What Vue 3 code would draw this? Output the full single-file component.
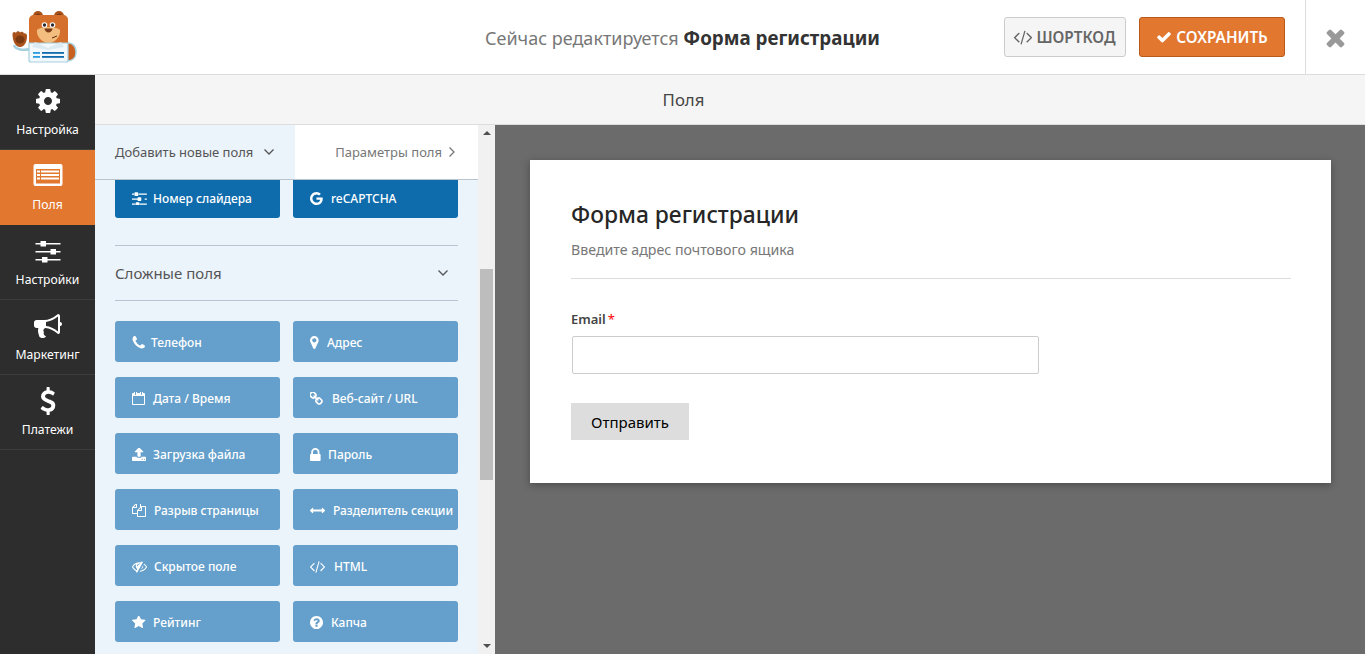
<script setup>
import { ref } from 'vue';

const icons = {
  cog: 'M1152 896q0-106-75-181t-181-75-181 75-75 181 75 181 181 75 181-75 75-181zm512-109v222q0 12-8 23t-20 13l-185 28q-19 54-39 91 35 50 107 138 10 12 10 25t-9 23q-27 37-99 108t-94 71q-12 0-26-9l-138-108q-44 23-91 38-16 136-29 186-7 28-36 28h-222q-14 0-24.500-8.500t-11.500-21.500l-28-184q-49-16-90-37l-141 107q-10 9-25 9-14 0-25-11-126-114-165-168-7-10-7-23 0-12 8-23 15-21 51-66.500t54-70.500q-27-50-41-99l-183-27q-13-2-21-12.500t-8-23.500v-222q0-12 8-23t19-13l186-28q14-46 39-92-40-57-107-138-10-12-10-24 0-10 9-23 26-36 98.500-107.500t94.500-71.500q13 0 26 10l138 107q44-23 91-38 16-136 29-186 7-28 36-28h222q14 0 24.500 8.500t11.500 21.500l28 184q49 16 90 37l142-107q9-9 24-9 13 0 25 10 129 119 165 170 7 8 7 22 0 12-8 23-15 21-51 66.500t-54 70.500q26 50 41 98l183 28q13 2 21 12.500t8 23.500z',
  sliders: 'M480 1408v128h-352v-128h352zm352-128q26 0 45 19t19 45v256q0 26-19 45t-45 19h-256q-26 0-45-19t-19-45v-256q0-26 19-45t45-19h256zm160-384v128h-864v-128h864zm-640-512v128h-224v-128h224zm1312 1024v128h-736v-128h736zm-960-1152q26 0 45 19t19 45v256q0 26-19 45t-45 19h-256q-26 0-45-19t-19-45v-256q0-26 19-45t45-19h256zm320 512q26 0 45 19t19 45v256q0 26-19 45t-45 19h-256q-26 0-45-19t-19-45v-256q0-26 19-45t45-19h256zm640 128v128h-224v-128h224zm0-512v128h-864v-128h864z',
  bullhorn: 'M1664 640q53 0 90.500 37.500t37.500 90.500-37.500 90.500-90.500 37.500v384q0 52-38 90t-90 38q-417-347-812-380-58 19-91 66t-31 100.500 40 92.500q-20 33-23 65.500t6 58 33.500 55 48 50 61.500 50.500q-29 58-111.500 83t-168.500 11.500-132-55.500q-7-23-29.500-87.500t-32-94.500-23-89-15-101 3.500-98.500 22-110.500h-122q-66 0-113-47t-47-113v-192q0-66 47-113t113-47h480q435 0 896-384 52 0 90 38t38 90v384zm-128 604v-954q-394 302-768 343v270q377 42 768 341z',
  usd: 'M1362 1185q0 153-99.500 263.500t-258.500 136.500v175q0 14-9 23t-23 9h-135q-13 0-22.500-9.500t-9.500-22.500v-175q-66-9-127.500-31t-101.500-44.500-74-48-46.500-37.500-17.500-18q-17-21-2-41l103-135q7-10 23-12 15-2 24 9l2 2q113 99 243 125 37 8 74 8 81 0 142.500-43t61.500-122q0-28-15-53t-33.500-42-58.500-37.500-66-32-80-32.500q-39-16-61.500-25t-61.500-26.500-62.500-31-56.500-35.500-53.500-42.500-43.500-49-35.500-58-21-66.500-8.500-78q0-138 98-242t255-134v-180q0-13 9.500-22.500t22.500-9.500h135q14 0 23 9t9 23v176q57 6 110.500 23t87 33.500 63.500 37.500 39 29 15 14q17 18 5 38l-81 146q-8 15-23 16-14 3-27-7-3-3-14.500-12t-39-26.500-58.500-32-74.500-26-85.500-11.500q-95 0-155 43t-60 111q0 26 8.500 48t29.500 41.500 39.500 33 56 31 60.500 27 70 27.500q53 20 81 31.500t76 35 75.500 42.500 62 50 53 63.500 31.500 76.500 13 94z',
  check: 'M1671 566q0 40-28 68l-724 724-136 136q-28 28-68 28t-68-28l-136-136-362-362q-28-28-28-68t28-68l136-136q28-28 68-28t68 28l294 295 656-657q28-28 68-28t68 28l136 136q28 28 28 68z',
  times: 'M1490 1322q0 40-28 68l-136 136q-28 28-68 28t-68-28l-294-294-294 294q-28 28-68 28t-68-28l-136-136q-28-28-28-68t28-68l294-294-294-294q-28-28-28-68t28-68l136-136q28-28 68-28t68 28l294 294 294-294q28-28 68-28t68 28l136 136q28 28 28 68t-28 68l-294 294 294 294q28 28 28 68z',
  code: 'M553 1399l-50 50q-10 10-23 10t-23-10l-466-466q-10-10-10-23t10-23l466-466q10-10 23-10t23 10l50 50q10 10 10 23t-10 23l-393 393 393 393q10 10 10 23t-10 23zm591-1067l-373 1291q-4 13-15.500 19.500t-23.500 2.500l-62-17q-13-4-19.500-15.500t-2.500-24.500l373-1291q4-13 15.500-19.500t23.500-2.500l62 17q13 4 19.500 15.500t2.500 24.500zm657 651l-466 466q-10 10-23 10t-23-10l-50-50q-10-10-10-23t10-23l393-393-393-393q-10-10-10-23t10-23l50-50q10-10 23-10t23 10l466 466q10 10 10 23t-10 23z',
  phone: 'M1600 1240q0 27-10 70.500t-21 68.500q-21 50-122 106-94 51-186 51-27 0-53-3.500t-57.500-12.500-47-14.500-55.500-20.500-49-18q-98-35-175-83-127-79-264-216t-216-264q-48-77-83-175-3-9-18-49t-20.500-55.500-14.500-47-12.500-57.500-3.500-53q0-92 51-186 56-101 106-122 25-11 68.500-21t70.500-10q14 0 21 3 18 6 53 76 11 19 30 54t35 63.500 31 53.500q3 4 17.500 25t21.500 35.500 7 28.500q0 20-28.500 50t-62 55-62 53-28.500 46q0 9 5 22.500t8.500 20.500 14 24 11.500 19q76 137 174 235t235 174q2 1 19 11.500t24 14 20.500 8.500 22.500 5q18 0 46-28.500t53-62 55-62 50-28.500q14 0 28.500 7t35.500 21.500 25 17.500q25 15 53.500 31t63.500 35 54 30q70 35 76 53 3 7 3 21z',
  marker: 'M1152 640q0-106-75-181t-181-75-181 75-75 181 75 181 181 75 181-75 75-181zm256 0q0 109-33 179l-364 774q-16 33-47.500 52t-67.500 19-67.500-19-46.500-52l-365-774q-33-70-33-179 0-212 150-362t362-150 362 150 150 362z',
  calendar: 'M192 1664h1408v-1024h-1408v1024zm384-1216v-288q0-14-9-23t-23-9h-64q-14 0-23 9t-9 23v288q0 14 9 23t23 9h64q14 0 23-9t9-23zm768 0v-288q0-14-9-23t-23-9h-64q-14 0-23 9t-9 23v288q0 14 9 23t23 9h64q14 0 23-9t9-23zm384-64v1280q0 52-38 90t-90 38h-1408q-52 0-90-38t-38-90v-1280q0-52 38-90t90-38h128v-96q0-66 47-113t113-47h64q66 0 113 47t47 113v96h384v-96q0-66 47-113t113-47h64q66 0 113 47t47 113v96h128q52 0 90 38t38 90z',
  link: 'M1456 1216q0-40-28-68l-208-208q-28-28-68-28-42 0-72 32 3 3 19 18.500t21.500 21.500 15 19 13 25.500 3.500 27.500q0 40-28 68t-68 28q-15 0-27.500-3.500t-25.500-13-19-15-21.500-21.500-18.500-19q-33 31-33 73 0 40 28 68l206 207q27 27 68 27 40 0 68-26l147-146q28-28 28-67zm-703-705q0-40-28-68l-206-207q-28-28-68-28-39 0-68 27l-147 146q-28 28-28 67 0 40 28 68l208 208q27 27 68 27 42 0 72-31-3-3-19-18.500t-21.500-21.500-15-19-13-25.500-3.500-27.500q0-40 28-68t68-28q15 0 27.500 3.500t25.500 13 19 15 21.500 21.500 18.500 19q33-31 33-73zm895 705q0 120-85 203l-147 146q-83 83-203 83-121 0-204-85l-206-207q-83-83-83-203 0-123 88-209l-88-88q-86 88-208 88-120 0-204-84l-208-208q-84-84-84-204t85-203l147-146q83-83 203-83 121 0 204 85l206 207q83 83 83 203 0 123-88 209l88 88q86-88 208-88 120 0 204 84l208 208q84 84 84 204z',
  upload: 'M1344 1472q0-26-19-45t-45-19-45 19-19 45 19 45 45 19 45-19 19-45zm256 0q0-26-19-45t-45-19-45 19-19 45 19 45 45 19 45-19 19-45zm128-224v320q0 40-28 68t-68 28h-1472q-40 0-68-28t-28-68v-320q0-40 28-68t68-28h427q21 56 70.500 92t110.500 36h256q61 0 110.500-36t70.500-92h427q40 0 68 28t28 68zm-325-648q-17 40-59 40h-256v448q0 26-19 45t-45 19h-256q-26 0-45-19t-19-45v-448h-256q-42 0-59-40-17-39 14-69l448-448q18-19 45-19t45 19l448 448q31 30 14 69z',
  lock: 'M640 768h512v-192q0-106-75-181t-181-75-181 75-75 181v192zm832 96v576q0 40-28 68t-68 28h-960q-40 0-68-28t-28-68v-576q0-40 28-68t68-28h32v-192q0-184 132-316t316-132 316 132 132 316v192h32q40 0 68 28t28 68z',
  files: 'M1696 384q40 0 68 28t28 68v1216q0 40-28 68t-68 28h-960q-40 0-68-28t-28-68v-288h-544q-40 0-68-28t-28-68v-672q0-40 20-88t48-76l408-408q28-28 76-48t88-20h416q40 0 68 28t28 68v328q68-40 128-40h416zm-544 213l-299 299h299v-299zm-640-384l-299 299h299v-299zm196 647l316-316v-416h-384v416q0 40-28 68t-68 28h-416v640h512v-256q0-40 20-88t48-76zm956 804v-1152h-384v416q0 40-28 68t-68 28h-416v640h896z',
  arrows: 'M1792 896q0 26-19 45l-256 256q-19 19-45 19t-45-19-19-45v-128h-1024v128q0 26-19 45t-45 19-45-19l-256-256q-19-19-19-45t19-45l256-256q19-19 45-19t45 19 19 45v128h1024v-128q0-26 19-45t45-19 45 19l256 256q19 19 19 45z',
  eyeSlash: 'M555 1335l78-141q-87-63-136-159t-49-203q0-121 61-225-229 117-381 353 167 258 427 375zm389-759q0-20-14-34t-34-14q-125 0-214.500 89.500t-89.500 214.500q0 20 14 34t34 14 34-14 14-34q0-86 61-147t147-61q20 0 34-14t14-34zm363-191q0 7-1 9-106 189-316 567t-315 566l-49 89q-10 16-28 16-12 0-134-70-16-10-16-28 0-12 44-87-143-65-263.500-173t-208.500-245q-20-31-20-69t20-69q153-235 380-371t496-136q89 0 180 17l54-97q10-16 28-16 5 0 18 6t31 15.500 33 18.500 31.500 18.500 19.500 11.500q16 10 16 27zm37 447q0 139-79 253.500t-209 164.500l280-502q8 45 8 84zm448 128q0 35-20 69-39 64-109 145-150 172-347.500 267t-419.500 95l74-132q212-18 392.500-137t301.500-307q-115-179-282-294l63-112q95 64 182.500 153t144.500 184q20 34 20 69z',
  star: 'M1728 647q0 22-26 48l-363 354 86 500q1 7 1 20 0 21-10.500 35.500t-30.500 14.500q-19 0-40-12l-449-236-449 236q-22 12-40 12-21 0-31.500-14.500t-10.500-35.500q0-6 2-20l86-500-364-354q-25-27-25-48 0-37 56-46l502-73 225-455q19-41 49-41t49 41l225 455 502 73q56 9 56 46z',
  question: 'M1024 1376v-192q0-14-9-23t-23-9h-192q-14 0-23 9t-9 23v192q0 14 9 23t23 9h192q14 0 23-9t9-23zm256-672q0-88-55.500-163t-138.500-116-170-41q-243 0-371 213-15 24 8 42l132 100q7 6 19 6 16 0 25-12 53-68 86-92 34-24 86-24 48 0 85.500 26t37.500 59q0 38-20 61t-68 45q-63 28-115.500 86.500t-52.500 125.500v36q0 14 9 23t23 9h192q14 0 23-9t9-23q0-19 21.500-49.500t54.500-49.500q32-18 49-28.500t46-35 44.500-48 28-60.500 12.500-81zm384 192q0 209-103 385.500t-279.500 279.500-385.500 103-385.500-103-279.500-279.500-103-385.500 103-385.500 279.500-279.500 385.500-103 385.500 103 279.500 279.500 103 385.500z',
  google: 'M896 786h725q12 67 12 128 0 217-91 387.500t-259.500 266.500-386.500 96q-157 0-299-60.500t-245-163.500-163.500-245-60.500-299 60.500-299 163.500-245 245-163.500 299-60.500q300 0 515 201l-209 201q-123-119-306-119-129 0-238.500 65t-173.500 176.500-64 243.500 64 243.500 173.500 176.500 238.500 65q87 0 160-24t120-60 82-82 51.500-87 22.500-78h-436v-264z'
};

const menu = ref([
  { label: 'Настройка', icon: 'cog' },
  { label: 'Поля', icon: 'list', active: true },
  { label: 'Настройки', icon: 'lines' },
  { label: 'Маркетинг', icon: 'bullhorn' },
  { label: 'Платежи', icon: 'usd' }
]);

// slot: ширина от начала иконки до начала текста
const topFields = ref([
  { label: 'Номер слайдера', icon: 'sliders', slot: 21, box: '128 224 1536 1344' },
  { label: 'reCAPTCHA', icon: 'google', slot: 21, box: '128 128 1536 1536' }
]);

const fancyFields = ref([
  { label: 'Телефон', icon: 'phone', slot: 19, box: '128 128 1472 1472' },
  { label: 'Адрес', icon: 'marker', slot: 17, box: '384 128 1024 1536' },
  { label: 'Дата / Время', icon: 'calendar', slot: 21, box: '64 128 1664 1664' },
  { label: 'Веб-сайт / URL', icon: 'link', slot: 22, box: '128 128 1536 1536' },
  { label: 'Загрузка файла', icon: 'upload', slot: 21, box: '64 128 1664 1536' },
  { label: 'Пароль', icon: 'lock', slot: 18, box: '320 128 1152 1408' },
  { label: 'Разрыв страницы', icon: 'files', slot: 22, box: '0 128 1792 1664' },
  { label: 'Разделитель секции', icon: 'arrows', slot: 23, box: '0 576 1792 640' },
  { label: 'Скрытое поле', icon: 'eyeSlash', slot: 22, box: '0 256 1792 1280' },
  { label: 'HTML', icon: 'code', slot: 24, box: '0 256 1792 1280' },
  { label: 'Рейтинг', icon: 'star', slot: 21, box: '64 128 1664 1600' },
  { label: 'Капча', icon: 'question', slot: 21, box: '128 128 1536 1536' }
]);

function iconStyle(f) {
  return { width: f.slot + 'px' };
}
</script>

<template>
  <div class="builder">
    <header class="toolbar">
      <div class="logo">
        <svg width="95" height="74" viewBox="0 0 95 74">
          <!-- хвост -->
          <path d="M66 43c6-1 10 3 10 9s-4 9-9 9z" fill="#c8601f" stroke="#a5d0df" stroke-width="1.400" />
          <!-- рукав -->
          <path d="M14 45c1 4 8 6 16 4" fill="none" stroke="#a5d0df" stroke-width="2.500" />
          <!-- лапа -->
          <path d="M12.500 34c0-2 2.500-3 3.500-1 .5-2 3-2.500 4-.5 1-1.500 3.500-1 4 1 1.500-.5 3 .5 3 2.500 0 6-2.500 11-7 11s-7.500-6-7.500-13z" fill="#a9521c" />
          <ellipse cx="20" cy="39.500" rx="4.500" ry="4" fill="#7c3a12" />
          <!-- уши -->
          <circle cx="38" cy="16" r="5" fill="#a9521c" />
          <circle cx="59" cy="16" r="5" fill="#a9521c" />
          <circle cx="38" cy="16" r="2.500" fill="#7c3a12" />
          <circle cx="59" cy="16" r="2.500" fill="#7c3a12" />
          <!-- голова -->
          <path d="M34 15h29c3 0 5 2 5 5v23H29V20c0-3 2-5 5-5z" fill="#d4702c" />
          <path d="M37 30c4-4 19-4 23 0 1 6-5 13-11.500 13S36 36 37 30z" fill="#f2bd7e" />
          <circle cx="44.500" cy="25" r="2.800" fill="#fff" />
          <circle cx="52.500" cy="25" r="2.800" fill="#fff" />
          <circle cx="44.500" cy="25" r="1.700" fill="#2d2a33" />
          <circle cx="52.500" cy="25" r="1.700" fill="#2d2a33" />
          <path d="M44.500 28.500h8c0 2-2 4-4 4s-4-2-4-4z" fill="#7a3b16" />
          <path d="M52 38l5-2" stroke="#5a2c10" stroke-width="1" fill="none" />
          <!-- рубашка с формой -->
          <path d="M29 43h39v17c0 1-1 2-2 2H31c-1 0-2-1-2-2z" fill="#f2f8fb" stroke="#a5d0df" stroke-width="1.200" />
          <path d="M35 42l13 6 13-6 3 5-16 3-16-3z" fill="#dcebf2" />
          <rect x="33" y="52" width="7" height="1.800" fill="#2a9be0" />
          <rect x="42" y="52" width="22" height="1.800" fill="#0e6cad" />
          <rect x="33" y="56" width="7" height="1.800" fill="#2a9be0" />
          <rect x="42" y="56" width="22" height="1.800" fill="#0e6cad" />
        </svg>
      </div>
      <div class="title">
        <span>Сейчас редактируется</span> <b>Форма регистрации</b>
      </div>
      <div class="actions">
        <button class="btn btn-code">
          <svg width="18" height="18" viewBox="0 0 1792 1792"><path :d="icons.code" fill="currentColor" /></svg>
          ШОРТКОД
        </button>
        <button class="btn btn-save">
          <svg width="16" height="16" viewBox="0 0 1792 1792"><path :d="icons.check" fill="currentColor" /></svg>
          СОХРАНИТЬ
        </button>
        <div class="close">
          <svg width="27" height="27" viewBox="0 0 1792 1792"><path :d="icons.times" fill="currentColor" /></svg>
        </div>
      </div>
    </header>

    <div class="main">
      <nav class="sidebar">
        <a v-for="m in menu" :key="m.label" class="nav-item" :class="{ active: m.active }">
          <svg v-if="m.icon === 'list'" class="nav-icon" width="30" height="28" viewBox="0 0 30 28">
            <rect x="0.500" y="2" width="29" height="22" rx="2" fill="#fff" />
            <rect x="3" y="7" width="24" height="14.500" fill="#e27730" />
            <g fill="#fff">
              <rect x="4" y="8.500" width="3" height="2" />
              <rect x="8" y="8.500" width="18" height="2" />
              <rect x="4" y="12" width="3" height="2" />
              <rect x="8" y="12" width="18" height="2" />
              <rect x="4" y="15.500" width="3" height="2" />
              <rect x="8" y="15.500" width="18" height="2" />
            </g>
          </svg>
          <svg v-else-if="m.icon === 'lines'" class="nav-icon" width="28" height="28" viewBox="0 0 28 28" fill="#fff">
            <rect x="1.500" y="6" width="25" height="1.500" />
            <rect x="1.500" y="14" width="25" height="1.500" />
            <rect x="1.500" y="22" width="25" height="1.500" />
            <rect x="6.500" y="4" width="5.500" height="5.500" />
            <rect x="16.500" y="12" width="5.500" height="5.500" />
            <rect x="8" y="20" width="5.500" height="5.500" />
          </svg>
          <svg v-else class="nav-icon" width="28" height="28" viewBox="0 0 1792 1792"><path :d="icons[m.icon]" fill="currentColor" /></svg>
          <span>{{ m.label }}</span>
        </a>
      </nav>

      <div class="workspace">
        <div class="section-bar">Поля</div>
        <div class="panes">
          <aside class="fields-pane">
            <div class="tabs">
              <div class="tab tab-add">
                Добавить новые поля
                <svg width="12" height="8" viewBox="0 0 12 8"><path d="M1.500 1.500 6 6l4.500-4.500" fill="none" stroke="currentColor" stroke-width="1.300" /></svg>
              </div>
              <div class="tab tab-opts">
                Параметры поля
                <svg width="8" height="12" viewBox="0 0 8 12"><path d="M1.500 1.500 6 6l-4.500 4.500" fill="none" stroke="currentColor" stroke-width="1.300" /></svg>
              </div>
            </div>
            <div class="fields-scroll">
              <div class="field-grid field-grid-top">
                <button v-for="f in topFields" :key="f.label" class="field-btn dark">
                  <span class="field-icon" :style="iconStyle(f)">
                    <svg height="13" :viewBox="f.box"><path :d="icons[f.icon]" fill="currentColor" /></svg>
                  </span>
                  {{ f.label }}
                </button>
              </div>
              <div class="group-head">
                <span>Сложные поля</span>
                <svg width="12" height="8" viewBox="0 0 12 8"><path d="M1.500 1.500 6 6l4.500-4.500" fill="none" stroke="currentColor" stroke-width="1.300" /></svg>
              </div>
              <div class="field-grid">
                <button v-for="f in fancyFields" :key="f.label" class="field-btn">
                  <span class="field-icon" :style="iconStyle(f)">
                    <svg height="13" :viewBox="f.box"><path :d="icons[f.icon]" fill="currentColor" /></svg>
                  </span>
                  {{ f.label }}
                </button>
              </div>
            </div>
            <div class="scrollbar">
              <span class="arrow up"></span>
              <div class="track"><div class="thumb"></div></div>
              <span class="arrow down"></span>
            </div>
          </aside>

          <section class="preview">
            <div class="card">
              <h2>Форма регистрации</h2>
              <p class="desc">Введите адрес почтового ящика</p>
              <hr />
              <label class="label">Email<span class="req">*</span></label>
              <input class="input" type="text" />
              <button class="submit">Отправить</button>
            </div>
          </section>
        </div>
      </div>
    </div>
  </div>
</template>

<style scoped>
.builder {
  height: 100vh;
  display: flex;
  flex-direction: column;
  overflow: hidden;
  font-family: "Noto Sans", "Open Sans", sans-serif;
}

/* ===== ВЕРХНЯЯ ПАНЕЛЬ ===== */
.toolbar {
  height: 74px;
  flex: none;
  border-bottom: 1px solid #ddd;
  background: #fff;
  display: grid;
  grid-template-columns: 1fr auto 1fr;
  align-items: center;
}

.logo {
  height: 74px;
}

.logo svg {
  display: block;
}

.title {
  padding-top: 2px;
  font-size: 18px;
  color: #777;
  white-space: nowrap;
}

.title b {
  color: #333;
  font-size: 18.8px;
  font-weight: 700;
}

.actions {
  display: flex;
  align-items: center;
  justify-content: flex-end;
  height: 74px;
}

.btn {
  height: 40px;
  border-radius: 3px;
  font-family: inherit;
  font-size: 15.300px;
  font-weight: 600;
  display: flex;
  align-items: center;
  justify-content: center;
  gap: 4px;
  padding: 0;
}

.btn-code {
  width: 122px;
  background: #f5f5f5;
  border: 1px solid #ccc;
  color: #666;
}

.btn-save {
  width: 146px;
  margin: 0 20px 0 13px;
  background: #e27730;
  border: 1px solid #b85a1b;
  color: #fff;
}

.close {
  width: 59px;
  height: 74px;
  border-left: 1px solid #ddd;
  color: #999;
  display: flex;
  align-items: center;
  justify-content: center;
}

/* ===== МЕНЮ СЛЕВА ===== */
.main {
  flex: 1;
  display: flex;
  min-height: 0;
}

.sidebar {
  width: 95px;
  flex: none;
  background: #2d2d2d;
}

.nav-item {
  height: 75px;
  box-sizing: border-box;
  border-bottom: 1px solid #3d3d3d;
  color: #fff;
  font-size: 12.200px;
  display: flex;
  flex-direction: column;
  align-items: center;
  padding-top: 12px;
  gap: 6px;
}

.nav-item.active {
  background: #e27730;
  border-bottom-color: #e27730;
}

.nav-icon {
  display: block;
}

/* ===== ПОЛЯ ===== */
.workspace {
  flex: 1;
  display: flex;
  flex-direction: column;
  min-width: 0;
}

.section-bar {
  height: 49px;
  flex: none;
  background: #f5f5f5;
  border-bottom: 1px solid #ddd;
  font-size: 16.800px;
  color: #444;
  line-height: 49px;
  padding-right: 93px;
  text-align: center;
}

.panes {
  flex: 1;
  display: flex;
  min-height: 0;
}

.fields-pane {
  width: 400px;
  flex: none;
  display: grid;
  grid-template-columns: 383px 17px;
  grid-template-rows: 55px 1fr;
  min-height: 0;
  background: #ebf3fb;
}

.tabs {
  grid-column: 1;
  display: flex;
  border-bottom: 1px solid #bbc3cc;
  box-sizing: border-box;
  font-size: 13px;
}

.tab {
  display: flex;
  align-items: center;
}

.tab-add {
  width: 200px;
  padding-left: 20px;
  box-sizing: border-box;
  color: #555;
  gap: 10px;
}

.tab-opts {
  flex: 1;
  background: #fff;
  color: #777;
  justify-content: flex-end;
  padding-right: 22px;
  gap: 6px;
}

.fields-scroll {
  grid-column: 1;
  grid-row: 2;
  padding: 0 20px;
  overflow: hidden;
  min-height: 0;
}

.field-grid {
  display: grid;
  grid-template-columns: 165px 165px;
  column-gap: 13px;
  row-gap: 15px;
}

.field-grid-top {
  margin-top: -3px;
}

.field-btn {
  height: 41px;
  padding: 2px 0 0 17px;
  border: none;
  border-radius: 3px;
  background: #659fcb;
  color: #fff;
  font-family: inherit;
  font-size: 12px;
  font-weight: 500;
  display: flex;
  align-items: center;
  white-space: nowrap;
  text-align: left;
}

.field-btn.dark {
  background: #0e6cad;
}

.field-icon {
  flex: none;
  display: flex;
  align-items: center;
}

.field-icon svg {
  display: block;
  max-width: 15px;
}

.group-head {
  margin-top: 27px;
  margin-bottom: 20px;
  height: 56px;
  box-sizing: border-box;
  border-top: 1px solid #bbc3d2;
  border-bottom: 1px solid #bbc3d2;
  display: flex;
  align-items: center;
  justify-content: space-between;
  padding-right: 9px;
  font-size: 15px;
  color: #555;
}

.scrollbar {
  grid-column: 2;
  grid-row: 1 / span 2;
  background: #f1f1f1;
  display: flex;
  flex-direction: column;
  align-items: center;
  min-height: 0;
}

.track {
  flex: 1;
  width: 100%;
  padding: 128px 0 158px 2px;
  box-sizing: border-box;
}

.thumb {
  width: 13px;
  height: 100%;
  background: #bdbdbd;
}

.arrow {
  flex: none;
  width: 0;
  height: 0;
  margin: 6px 0;
  border-left: 4px solid transparent;
  border-right: 4px solid transparent;
}

.arrow.up {
  border-bottom: 4px solid #505050;
}

.arrow.down {
  border-top: 4px solid #505050;
}

/* ===== ПРЕДПРОСМОТР ===== */
.preview {
  flex: 1;
  background: #6b6b6b;
  padding: 35px 34px 0 35px;
  min-width: 0;
}

.card {
  height: 323px;
  box-sizing: border-box;
  background: #fff;
  box-shadow: 0 2px 8px rgba(0, 0, 0, 0.3);
  padding: 41px 40px 0 41px;
  display: flex;
  flex-direction: column;
  align-items: flex-start;
}

.card h2 {
  margin: 0;
  font-size: 22.800px;
  font-weight: 500;
  line-height: 28px;
  color: #262626;
}

.desc {
  margin: 11px 0 0;
  font-size: 14.200px;
  line-height: 20px;
  color: #777;
}

.card hr {
  width: 100%;
  margin: 18px 0 0;
  border: none;
  border-top: 1px solid #ddd;
}

.label {
  margin-top: 31px;
  font-size: 13px;
  font-weight: 600;
  line-height: 18px;
  color: #444;
}

.req {
  margin-left: 2px;
  color: #ff0000;
  font-weight: 400;
}

.input {
  width: 467px;
  height: 38px;
  box-sizing: border-box;
  margin: 8px 0 0 1px;
  border: 1px solid #ccc;
  border-radius: 2px;
  background: #fff;
}

.submit {
  width: 118px;
  height: 37px;
  margin-top: 29px;
  border: none;
  background: #ddd;
  color: #000;
  font-family: inherit;
  font-size: 15px;
  padding: 0;
}
</style>
